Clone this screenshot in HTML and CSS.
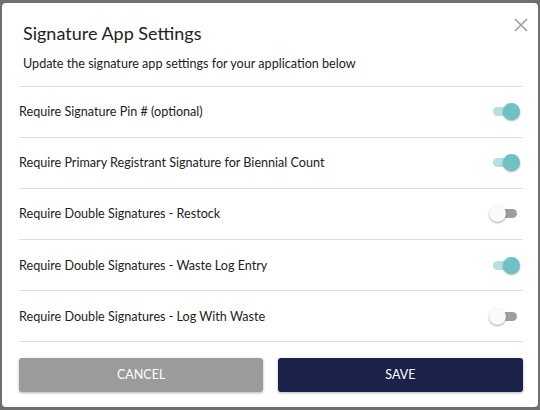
FILE: index.html
```html
<!DOCTYPE html>
<html>
<head>
<meta charset="utf-8">
<link rel="stylesheet" href="styles.css">
</head>
<body>
<div class="dialog">
  <button class="close" aria-label="Close">
    <svg width="14" height="14" viewBox="0 0 14 14"><path d="M1 1 L13 13 M13 1 L1 13" stroke="#9b9b9b" stroke-width="1.5" fill="none"/></svg>
  </button>
  <h1 class="title">Signature App Settings</h1>
  <p class="subtitle">Update the signature app settings for your application below</p>
  <div class="rows">
    <div class="row"><span class="label">Require Signature Pin # (optional)</span><span class="toggle on"><span class="track"></span><span class="thumb"></span></span></div>
    <div class="row"><span class="label">Require Primary Registrant Signature for Biennial Count</span><span class="toggle on"><span class="track"></span><span class="thumb"></span></span></div>
    <div class="row"><span class="label">Require Double Signatures - Restock</span><span class="toggle"><span class="track"></span><span class="thumb"></span></span></div>
    <div class="row"><span class="label">Require Double Signatures - Waste Log Entry</span><span class="toggle on"><span class="track"></span><span class="thumb"></span></span></div>
    <div class="row"><span class="label">Require Double Signatures - Log With Waste</span><span class="toggle"><span class="track"></span><span class="thumb"></span></span></div>
  </div>
  <div class="actions">
    <button class="btn cancel">CANCEL</button>
    <button class="btn save">SAVE</button>
  </div>
</div>
</body>
</html>
```
FILE: styles.css
```css
html, body {
  margin: 0;
  padding: 0;
}
body {
  background: #6f6f6f;
  width: 540px;
  height: 410px;
  overflow: hidden;
  font-family: Lato, "Open Sans", sans-serif;
  color: #222;
}
.dialog {
  position: relative;
  box-sizing: border-box;
  margin: 3px 0 0 2px;
  width: 536px;
  height: 404px;
  background: #fff;
  border-radius: 4px;
  padding: 18.5px 15.5px 0 17px;
}
.close {
  position: absolute;
  top: 15px;
  right: 10px;
  width: 14px;
  height: 14px;
  padding: 0;
  border: 0;
  background: none;
  display: block;
}
.close svg { display: block; }
.title {
  margin: 0 0 12px 4px;
  font-size: 18px;
  line-height: 22px;
  font-weight: 400;
  color: #222;
}
.subtitle {
  margin: 0;
  padding: 0 0 14px 4px;
  font-size: 12.6px;
  line-height: 16px;
  border-bottom: 1px solid #e0e0e0;
  color: #222;
}
.rows {
  display: flex;
  flex-direction: column;
}
.row {
  display: flex;
  align-items: center;
  justify-content: space-between;
  height: 50.2px;
  border-bottom: 1px solid #e0e0e0;
  font-size: 12.6px;
}
.toggle {
  position: relative;
  width: 31px;
  height: 17px;
  margin-right: 2.5px;
}
.track {
  position: absolute;
  left: 3.5px;
  top: 4px;
  width: 24px;
  height: 9px;
  border-radius: 5px;
  background: #9e9e9e;
}
.thumb {
  position: absolute;
  left: 0;
  top: 0;
  width: 17px;
  height: 17px;
  border-radius: 50%;
  background: #fafafa;
  box-shadow: 0 1px 2px rgba(0,0,0,0.35);
}
.toggle.on .track { background: #b4e0e2; }
.toggle.on .thumb { left: 14px; background: #6ec2c6; }
.actions {
  display: flex;
  gap: 15px;
  padding-top: 16px;
}
.btn {
  flex: 1;
  height: 34px;
  padding: 0 0 2px;
  border: 0;
  border-radius: 3px;
  color: #fff;
  font-family: Lato, "Open Sans", sans-serif;
  font-size: 12.5px;
  box-shadow: 0 1px 3px rgba(0,0,0,0.3);
}
.cancel { background: #9b9b9b; }
.save { background: #1a2249; }
```
